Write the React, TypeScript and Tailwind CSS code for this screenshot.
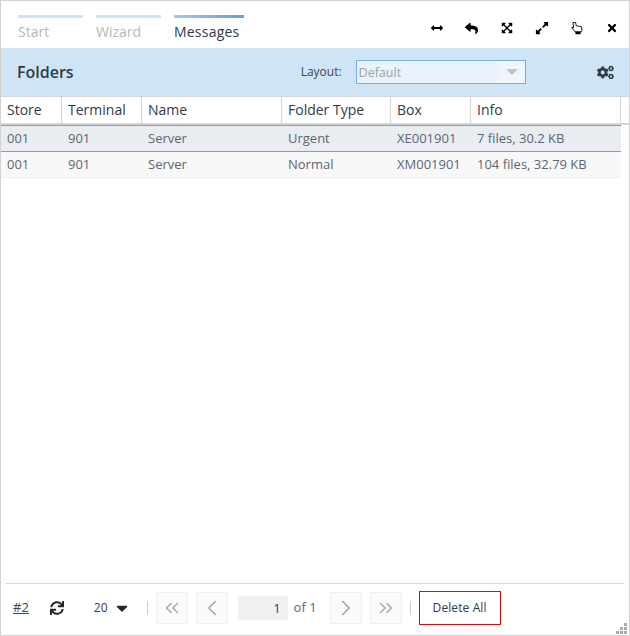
import { FaArrowsAltH, FaCaretDown, FaCogs, FaExpandAlt, FaExpandArrowsAlt, FaReply, FaSync, FaTimes } from 'react-icons/fa'
import { LuChevronLeft, LuChevronRight, LuChevronsLeft, LuChevronsRight } from 'react-icons/lu'

const rows = [
  { store: '001', terminal: '901', name: 'Server', type: 'Urgent', box: 'XE001901', info: '7 files, 30.2 KB' },
  { store: '001', terminal: '901', name: 'Server', type: 'Normal', box: 'XM001901', info: '104 files, 32.79 KB' },
]

const columns = ['Store', 'Terminal', 'Name', 'Folder Type', 'Box', 'Info']
const grid = 'grid grid-cols-[61px_80px_140px_109px_80px_150px]'

function Tab({ label, width, active }: { label: string; width: string; active?: boolean }) {
  return (
    <div className={width}>
      <div className={active ? 'h-[3px] bg-gradient-to-r from-[#a3c9ec] to-[#659fd8]' : 'h-[3px] bg-[#cfe5f6]'} />
      <div className={active ? 'mt-[4px] text-[14px] leading-[19px] tracking-[0.015em] text-[#2f3b4a]' : 'mt-[4px] text-[14px] leading-[19px] text-[#b4b7bb]'}>
        {label}
      </div>
    </div>
  )
}

function PagerButton({ children }: { children: React.ReactNode }) {
  return (
    <button className="flex h-8 w-8 items-center justify-center border border-[#eeeeee] bg-[#fafafa] text-[#a3a3a3]">
      {children}
    </button>
  )
}

// outlined pointing hand with a solid cuff
function HandIcon() {
  return (
    <svg viewBox="0 0 14 14" className="h-[14px] w-[14px]">
      <path d="M3 1.5h2.6l.6 3.2 5.3 1.1.4 4-1 1.2H5.4L1.6 6.6l2 .1z" fill="white" stroke="black" strokeWidth="0.9" strokeLinejoin="round" />
      <path d="M5.2 10.6h5.6l-.3 2.6H5.6z" fill="black" />
    </svg>
  )
}

export default function App() {
  return (
    <div className="flex h-[636px] w-[630px] flex-col border border-[#d2d2d2] bg-white font-['Open_Sans',sans-serif]">
      {/* tabs and window tools */}
      <div className="flex h-[47px] items-start pl-[17px] pr-[11px] pt-[14px]">
        <div className="flex gap-[13px]">
          <Tab label="Start" width="w-[65px]" />
          <Tab label="Wizard" width="w-[65px]" />
          <Tab label="Messages" width="w-[70px]" active />
        </div>
        <div className="ml-auto mt-[7px] flex h-3 items-center text-black">
          <FaArrowsAltH className="h-3 w-3" />
          <FaReply className="ml-[22px] h-[13px] w-[13px]" />
          <FaExpandArrowsAlt className="ml-[23px] h-3 w-3" />
          <FaExpandAlt className="ml-[22px] h-[14px] w-[14px]" />
          <div className="ml-[21px]"><HandIcon /></div>
          <FaTimes className="ml-[22px] h-3 w-3" />
        </div>
      </div>

      {/* title band */}
      <div className="flex h-[48px] items-center bg-[#cfe5f6] pl-[16px] pr-[15px]">
        <h1 className="text-[16px] font-semibold text-[#2f3b4a]">Folders</h1>
        <span className="ml-[227px] text-[12px] text-[#3c4654]">Layout:</span>
        <div className="ml-[14px] flex h-[24px] w-[170px] items-center border border-[#76aee3] bg-[#eaf3fb]">
          <span className="pl-[2px] pt-[1px] text-[12.5px] leading-[23px] text-[#9a9fa5]">Default</span>
          <div className="ml-auto flex h-full w-[26px] items-center justify-center bg-[#eff5fb]">
            <div className="h-0 w-0 border-x-[6px] border-t-[6px] border-x-transparent border-t-[#c2c2c2]" />
          </div>
        </div>
        <FaCogs className="ml-auto h-[17px] w-[17px] text-[#333d47]" />
      </div>

      {/* table */}
      <div className="border-t border-[#d6d6d6]">
        <div className={`${grid} h-[28px] border-b-2 border-[#d4d4d4]`}>
          {columns.map((c) => (
            <div key={c} className="border-r border-[#d6d6d6] pl-[6px] text-[14px] leading-[26px] text-[#2f3b4a]">
              {c}
            </div>
          ))}
        </div>
        {rows.map((r, i) => (
          <div
            key={r.box}
            className={
              i === 0
                ? `${grid} h-[27px] w-[620px] border-y border-[#6aa6e0] bg-[#e9ecf1] text-[13px] leading-[25px] text-[#5b6675]`
                : `${grid} h-[26px] w-[620px] border-b border-[#eceef3] bg-[#f8f8f8] text-[13px] leading-[25px] text-[#5b6675]`
            }
          >
            <div className="pl-[6px]">{r.store}</div>
            <div className="pl-[6px]">{r.terminal}</div>
            <div className="pl-[6px]">{r.name}</div>
            <div className="pl-[6px]">{r.type}</div>
            <div className="pl-[6px]">{r.box}</div>
            <div className="pl-[6px]">{r.info}</div>
          </div>
        ))}
      </div>

      {/* pager */}
      <div className="relative mx-[5px] mt-auto flex h-[52px] items-center border-t border-[#d6d6d6] pb-[3px] pl-[7px]">
        <a className="text-[13px] text-[#3c4654] underline">#2</a>
        <FaSync className="ml-[21px] h-[14px] w-[14px] text-[#1f2730]" />
        <span className="ml-[30px] text-[12px] text-[#2f3b4a]">20</span>
        <FaCaretDown className="ml-[5px] h-[18px] w-[18px] text-[#1f2730]" />
        <div className="ml-[16px] mr-[8px] h-[14px] w-px bg-[#cccccc]" />
        <div className="flex gap-[8px]">
          <PagerButton><LuChevronsLeft size={22} strokeWidth={1.5} /></PagerButton>
          <PagerButton><LuChevronLeft size={26} strokeWidth={1.4} /></PagerButton>
        </div>
        <div className="ml-[10px] h-[24px] w-[50px] bg-[#f1f1f1] pr-[7px] text-right text-[13px] leading-[24px] text-[#2f3b6a]">1</div>
        <span className="ml-[6px] text-[13px] text-[#5b6675]">of 1</span>
        <div className="ml-[13px] flex gap-[8px]">
          <PagerButton><LuChevronRight size={26} strokeWidth={1.4} /></PagerButton>
          <PagerButton><LuChevronsRight size={22} strokeWidth={1.5} /></PagerButton>
        </div>
        <div className="ml-[8px] h-[14px] w-px bg-[#cccccc]" />
        <button className="ml-[8px] h-[34px] w-[82px] border border-[#e30613] text-[12px] tracking-[0.1px] text-[#2f3b4a]">Delete All</button>
        {/* resize grip */}
        <div className="absolute bottom-[1px] right-[-3px] grid grid-cols-3 gap-px">
          <i /><i /><i className="h-[3px] w-[3px] bg-[#aaaaaa]" />
          <i /><i className="h-[3px] w-[3px] bg-[#aaaaaa]" /><i className="h-[3px] w-[3px] bg-[#aaaaaa]" />
          <i className="h-[3px] w-[3px] bg-[#aaaaaa]" /><i className="h-[3px] w-[3px] bg-[#aaaaaa]" /><i className="h-[3px] w-[3px] bg-[#aaaaaa]" />
        </div>
      </div>
    </div>
  )
}
